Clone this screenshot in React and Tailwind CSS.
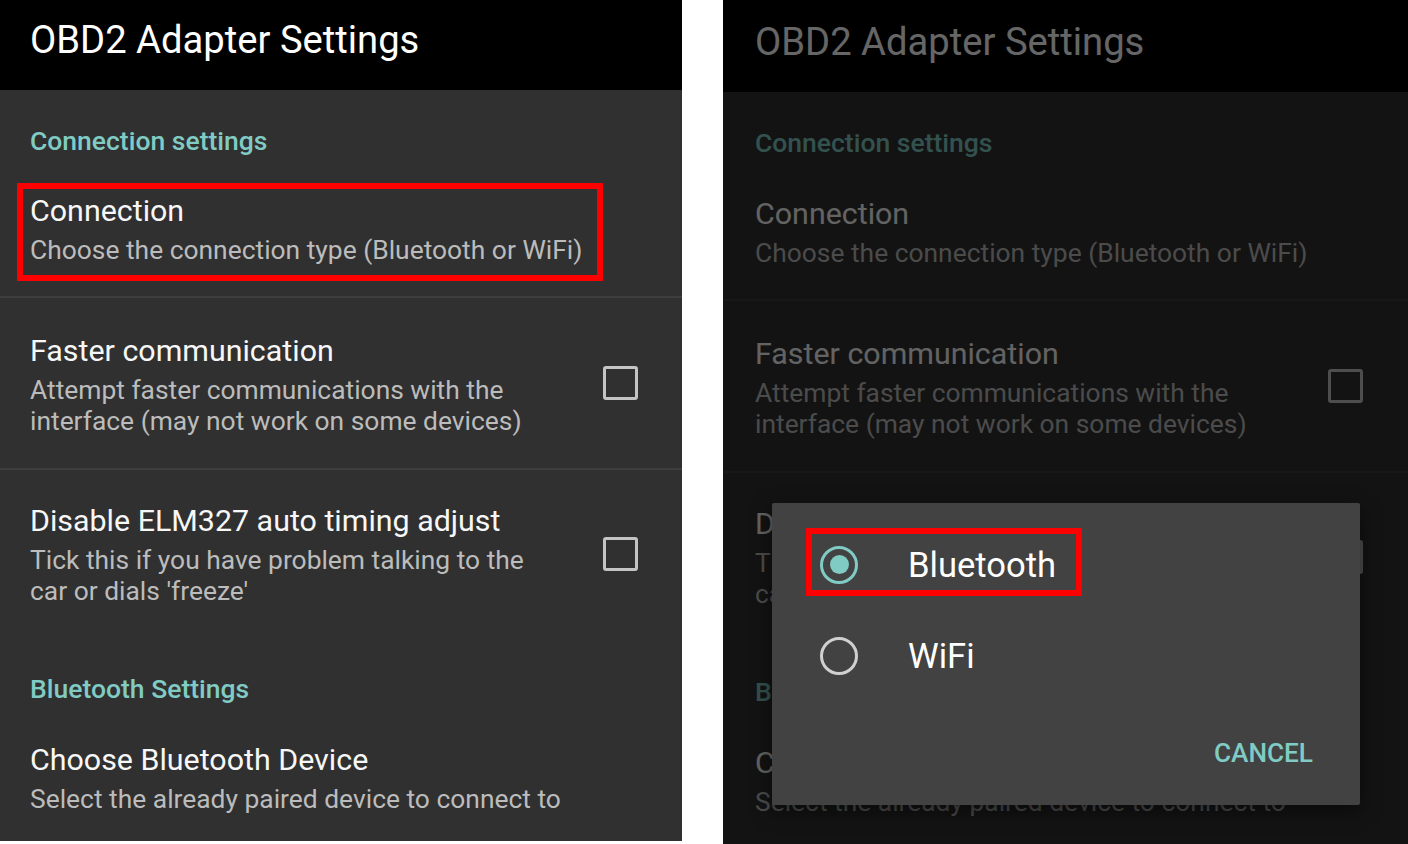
import React from "react";

function Checkbox() {
  return <div className="w-[35px] h-[34px] shrink-0 rounded-[3px] border-[3px] border-[#c4c4c4]" />;
}

function Item({ title, lines, checkbox, pad, cls }) {
  return (
    <div className={`flex items-center ${cls}`}>
      <div className={`flex-1 ${pad}`}>
        <div className="text-[30.4px] leading-[36px] text-[#f7f7f7] whitespace-nowrap">{title}</div>
        <div className="mt-[6px] text-[26.4px] leading-[31px] text-[#bcbcbc]">
          {lines.map((l, i) => (
            <div key={i} className="whitespace-nowrap">{l}</div>
          ))}
        </div>
      </div>
      {checkbox && <Checkbox />}
    </div>
  );
}

function Divider() {
  return <div className="h-[2px] bg-[#3d3d3d] shrink-0" />;
}

function Panel({ right }) {
  const px = right ? "pl-[32px] pr-[45px]" : "pl-[30px] pr-[44px]";
  return (
    <div
      className={`relative shrink-0 flex flex-col overflow-hidden bg-[#303030] ${
        right ? "w-[685px] h-[844px]" : "w-[682px] h-[841px]"
      }`}
    >
      <div className={`shrink-0 bg-black ${right ? "h-[92px] pl-[32px] pt-[20px]" : "h-[90px] pl-[30px] pt-[18px]"}`}>
        <div className="text-[38.2px] leading-[44px] text-white whitespace-nowrap">OBD2 Adapter Settings</div>
      </div>
      <div className={`${px} h-[68px] pt-[36px] text-[26.5px] leading-[30px] font-medium text-[#80cbc4] whitespace-nowrap`}>
        Connection settings
      </div>
      <Item
        cls={px}
        pad="pt-[36px] pb-[30px]"
        title="Connection"
        lines={["Choose the connection type (Bluetooth or WiFi)"]}
      />
      <Divider />
      <Item
        cls={px}
        pad="pt-[35px] pb-[31px]"
        title="Faster communication"
        lines={["Attempt faster communications with the", "interface (may not work on some devices)"]}
        checkbox
      />
      <Divider />
      <Item
        cls={px}
        pad="pt-[33px] pb-[31px]"
        title="Disable ELM327 auto timing adjust"
        lines={["Tick this if you have problem talking to the", "car or dials 'freeze'"]}
        checkbox
      />
      <div className={`${px} h-[70px] pt-[36px] text-[26.5px] leading-[30px] font-medium text-[#80cbc4] whitespace-nowrap`}>
        Bluetooth Settings
      </div>
      <Item
        cls={px}
        pad="pt-[35px] pb-[26px]"
        title="Choose Bluetooth Device"
        lines={["Select the already paired device to connect to"]}
      />

      {!right && (
        <div className="absolute left-[17px] top-[183px] w-[586px] h-[98px] border-[6px] border-[#ff0000]" />
      )}

      {right && (
        <>
          <div className="absolute inset-0 bg-black/60" />
          <div className="absolute left-[49px] top-[503px] w-[588px] h-[302px] rounded-[2px] bg-[#424242] shadow-[0_6px_20px_rgba(0,0,0,0.5)] flex flex-col pt-[16px]">
            <div className="h-[91px] flex items-center pl-[48px]">
              <div className="w-[38px] h-[38px] rounded-full border-[3.5px] border-[#80cbc4] flex items-center justify-center">
                <div className="w-[19px] h-[19px] rounded-full bg-[#80cbc4]" />
              </div>
              <span className="ml-[50px] text-[34.6px] leading-[40px] text-white">Bluetooth</span>
            </div>
            <div className="h-[91px] flex items-center pl-[48px]">
              <div className="w-[38px] h-[38px] rounded-full border-[3.5px] border-[#d0d0d0]" />
              <span className="ml-[50px] text-[34.6px] leading-[40px] text-white">WiFi</span>
            </div>
            <div className="mt-[29px] h-[48px] flex items-center justify-end pr-[47px] text-[26.2px] font-medium text-[#80cbc4]">
              CANCEL
            </div>
            <div className="absolute left-[34px] top-[25px] w-[276px] h-[68px] border-[6px] border-[#ff0000]" />
          </div>
        </>
      )}
    </div>
  );
}

export default function App() {
  return (
    <div className="w-[1408px] h-[844px] bg-white flex items-start gap-[41px] overflow-hidden font-[family-name:Roboto,sans-serif]">
      <Panel />
      <Panel right />
    </div>
  );
}
